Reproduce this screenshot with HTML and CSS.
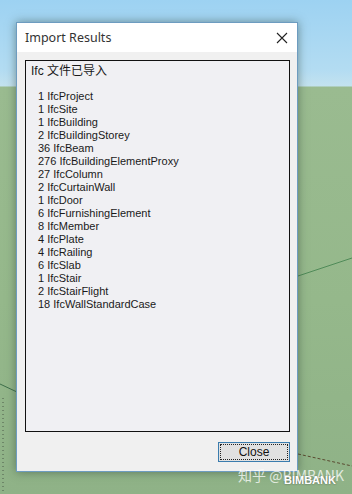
FILE: index.html
```html
<!DOCTYPE html>
<html>
<head>
    <title>Import Results</title>
    <link rel="stylesheet" href="styles.css">
</head>
<body>

    <!-- SketchUp scene behind the dialog -->
    <svg class="scene" width="352" height="494" viewBox="0 0 352 494">
        <line x1="0" y1="384" x2="17" y2="392" stroke="#3d6f4a" stroke-width="1"/>
        <line x1="3" y1="398" x2="3" y2="494" stroke="#4a5a48" stroke-width="1" stroke-dasharray="1 3"/>
        <line x1="298" y1="276" x2="352" y2="258" stroke="#4f8a58" stroke-width="1"/>
        <line x1="298" y1="454" x2="352" y2="466" stroke="#5a4a30" stroke-width="1" stroke-dasharray="3 2"/>
    </svg>

    <div class="window">
        <div class="titlebar">
            <span class="title">Import Results</span>
            <svg class="close-x" width="12" height="12" viewBox="0 0 12 12">
                <path d="M1 1 L11 11 M11 1 L1 11" stroke="#222" stroke-width="1.1" fill="none"/>
            </svg>
        </div>

        <div class="content">
            <div class="listbox">
                <div class="heading">Ifc 文件已导入</div>
                <div class="blank"></div>
                <div class="item">1 IfcProject</div>
                <div class="item">1 IfcSite</div>
                <div class="item">1 IfcBuilding</div>
                <div class="item">2 IfcBuildingStorey</div>
                <div class="item">36 IfcBeam</div>
                <div class="item">276 IfcBuildingElementProxy</div>
                <div class="item">27 IfcColumn</div>
                <div class="item">2 IfcCurtainWall</div>
                <div class="item">1 IfcDoor</div>
                <div class="item">6 IfcFurnishingElement</div>
                <div class="item">8 IfcMember</div>
                <div class="item">4 IfcPlate</div>
                <div class="item">4 IfcRailing</div>
                <div class="item">6 IfcSlab</div>
                <div class="item">1 IfcStair</div>
                <div class="item">2 IfcStairFlight</div>
                <div class="item">18 IfcWallStandardCase</div>
            </div>

            <div class="buttons">
                <button class="close-button"><span>Close</span></button>
            </div>
        </div>
    </div>

    <!-- watermark -->
    <div class="watermark">知乎 @BIMBANK</div>
    <div class="watermark-logo">BIMBANK</div>

</body>
</html>
```

FILE: styles.css
```css
/* page = the SketchUp viewport */
body {
    margin: 0;
    width: 352px;
    height: 494px;
    overflow: hidden;
    position: relative;
    font-family: "Liberation Sans", Arial, sans-serif;
    background: linear-gradient(to bottom,
        #9dd2f2 0px,
        #b3dcf2 70px,
        #c3e2ef 86px,
        #9abb90 87px,
        #95b88b 300px,
        #8fb287 494px);
}

.scene {
    position: absolute;
    left: 0;
    top: 0;
}

/* dialog window */
.window {
    position: relative;
    margin-left: 16px;
    margin-top: 22px;
    width: 280px;
    height: 448px;
    border: 1px solid #6d9cc0;
    background-color: #f0f0f0;
    box-shadow: 0 0 9px rgba(40, 60, 50, 0.5);
    display: flex;
    flex-direction: column;
}

.titlebar {
    height: 29px;
    background-color: #fff;
    display: flex;
    align-items: center;
    justify-content: space-between;
    padding-left: 8px;
    padding-right: 9px;
}

.title {
    font-family: "Noto Sans", "Open Sans", sans-serif;
    font-size: 12.5px;
    color: #333;
}

.close-x {
    display: block;
}

.content {
    flex: 1;
    display: flex;
    flex-direction: column;
    padding: 8px 7px 9px 8px;
}

/* results box */
.listbox {
    height: 364px;
    border: 1px solid #111;
    background-color: #f0f0f3;
    padding: 3px 4px;
    font-family: "Liberation Sans", Arial, sans-serif;
    font-size: 11px;
    line-height: 13px;
    color: #1a1a1a;
}

.heading {
    font-family: "Liberation Sans", "Noto Sans CJK SC", sans-serif;
    font-size: 12px;
    line-height: 14px;
    padding-left: 1px;
}

.blank {
    height: 12px;
}

.item {
    padding-left: 8px;
    white-space: nowrap;
}

.buttons {
    margin-top: auto;
    display: flex;
    justify-content: flex-end;
}

.close-button {
    width: 72px;
    height: 20px;
    padding: 1px;
    border: 1px solid #3a7cae;
    background-color: #e1e1e1;
    font-family: "Liberation Sans", Arial, sans-serif;
    font-size: 12px;
    color: #111;
    cursor: pointer;
}

.close-button span {
    display: block;
    height: 100%;
    line-height: 15px;
    border: 1px dotted #222;
    box-sizing: border-box;
}

.watermark {
    position: absolute;
    left: 238px;
    top: 465px;
    font-family: "Noto Sans CJK SC", sans-serif;
    font-size: 14px;
    color: rgba(255, 255, 255, 0.75);
}

.watermark-logo {
    position: absolute;
    left: 284px;
    top: 474px;
    font-family: "Liberation Sans", Arial, sans-serif;
    font-weight: bold;
    font-size: 11px;
    color: #fff;
    text-shadow: 0 0 2px rgba(0, 0, 0, 0.5);
}
```
